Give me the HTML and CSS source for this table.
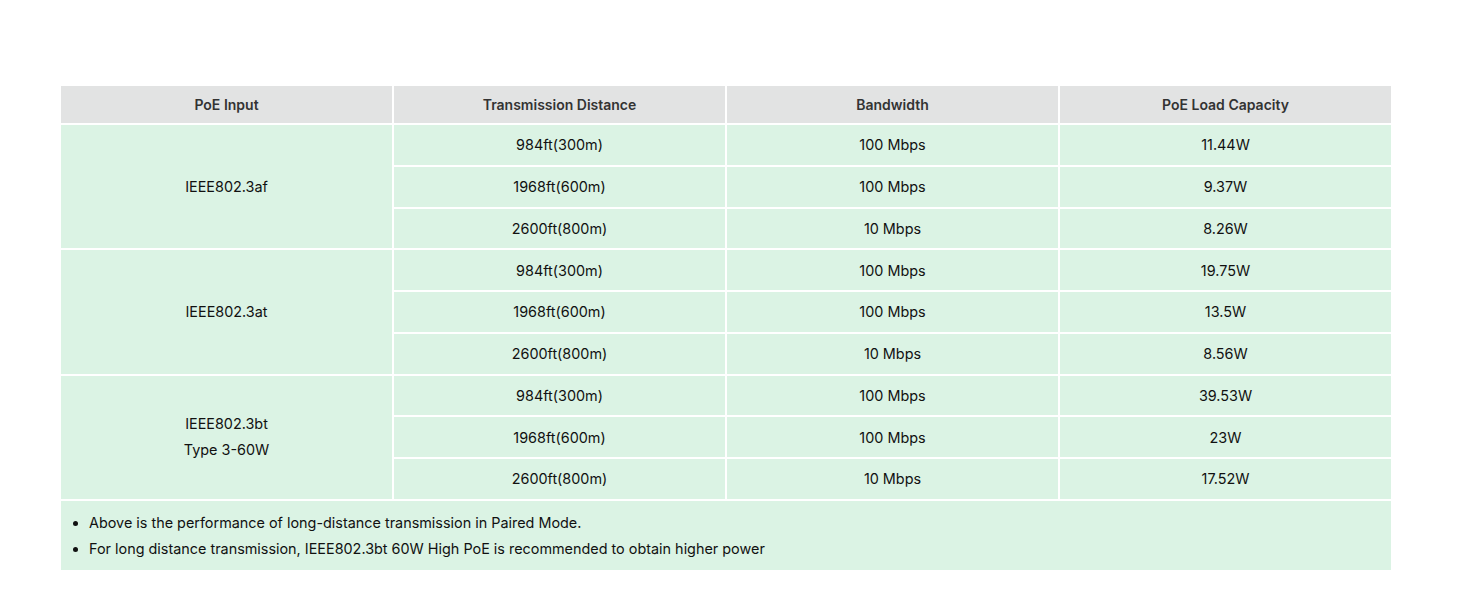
FILE: index.html
```html
<!DOCTYPE html>
<html lang="en">
<head>
<meta charset="utf-8">
<title>PoE Transmission</title>
<link rel="stylesheet" href="styles.css">
</head>
<body>
<div class="page">
  <table class="spec">
    <thead>
      <tr>
        <th>PoE Input</th>
        <th>Transmission Distance</th>
        <th>Bandwidth</th>
        <th>PoE Load Capacity</th>
      </tr>
    </thead>
    <tbody>
      <tr><td rowspan="3" class="group">IEEE802.3af</td><td>984ft(300m)</td><td>100 Mbps</td><td>11.44W</td></tr>
      <tr><td>1968ft(600m)</td><td>100 Mbps</td><td>9.37W</td></tr>
      <tr><td>2600ft(800m)</td><td>10 Mbps</td><td>8.26W</td></tr>
      <tr><td rowspan="3" class="group">IEEE802.3at</td><td>984ft(300m)</td><td>100 Mbps</td><td>19.75W</td></tr>
      <tr><td>1968ft(600m)</td><td>100 Mbps</td><td>13.5W</td></tr>
      <tr><td>2600ft(800m)</td><td>10 Mbps</td><td>8.56W</td></tr>
      <tr><td rowspan="3" class="group two">IEEE802.3bt<br>Type 3-60W</td><td>984ft(300m)</td><td>100 Mbps</td><td>39.53W</td></tr>
      <tr><td>1968ft(600m)</td><td>100 Mbps</td><td>23W</td></tr>
      <tr><td>2600ft(800m)</td><td>10 Mbps</td><td>17.52W</td></tr>
      <tr>
        <td colspan="4" class="notes">
          <ul>
            <li>Above is the performance of long-distance transmission in Paired Mode.</li>
            <li>For long distance transmission, IEEE802.3bt 60W High PoE is recommended to obtain higher power</li>
          </ul>
        </td>
      </tr>
    </tbody>
  </table>
</div>
</body>
</html>
```

FILE: styles.css
```css
html, body {
  margin: 0;
  padding: 0;
  background: #ffffff;
}
body {
  font-family: Inter, "Noto Sans", "Liberation Sans", sans-serif;
  color: #111;
}
.page {
  padding: 84px 0 0 59px;
}
.spec {
  width: 1334px;
  border-collapse: separate;
  border-spacing: 2.5px;
  table-layout: fixed;
  font-size: 14.4px;
}
.spec th {
  height: 37px;
  padding: 0;
  background: #e2e3e3;
  color: #333;
  font-size: 14px;
  font-weight: 600;
  text-align: center;
  vertical-align: middle;
}
.spec td {
  height: 39.75px;
  padding: 0;
  background: #dbf3e4;
  text-align: center;
  vertical-align: middle;
}
.spec td.group.two {
  line-height: 26px;
}
.spec td.notes {
  height: 69px;
  text-align: left;
  padding: 2px 0 0;
  box-sizing: border-box;
}
.notes ul {
  margin: 0;
  padding: 0 0 0 28px;
  line-height: 26px;
}
```
